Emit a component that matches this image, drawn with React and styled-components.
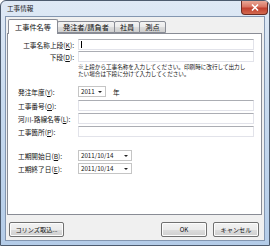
import React from "react";
import styled, { createGlobalStyle } from "styled-components";

const GlobalStyle = createGlobalStyle`
  html, body {
    margin: 0;
    padding: 0;
    background: #ffffff;
  }
  body {
    font-family: "Noto Sans CJK JP", "Noto Sans", sans-serif;
  }
  u {
    text-decoration-thickness: 0.5px;
    text-underline-offset: 1px;
  }
`;

const Window = styled.div`
  width: 270px;
  height: 246px;
  box-sizing: border-box;
  border: 1px solid #4d5b6e;
  border-radius: 6px 6px 0 0;
  background: linear-gradient(180deg, #dfe9f5 0%, #c9dbef 40%, #b4cce8 100%);
  display: flex;
  flex-direction: column;
  overflow: hidden;
`;

const TitleBar = styled.div`
  height: 15px;
  display: flex;
  align-items: flex-start;
  justify-content: space-between;
  padding-left: 6px;
`;

const Title = styled.span`
  font-size: 6.6px;
  line-height: 14px;
  color: #1a1a1a;
`;

const CloseButton = styled.div`
  width: 27px;
  height: 14px;
  margin-right: 1px;
  box-sizing: border-box;
  border: 1px solid #6b2b22;
  border-top: none;
  border-radius: 0 0 4px 4px;
  background: linear-gradient(180deg, #e9a897 0%, #d97462 45%, #c1402f 55%, #d2694f 100%);
  display: flex;
  align-items: center;
  justify-content: center;
`;

const Client = styled.div`
  flex: 1;
  margin: 0 4px 4px 4px;
  border: 1px solid #8396b0;
  background: #f0f0f0;
  display: flex;
  flex-direction: column;
  padding: 1px 1px 0 1px;
`;

const TabStrip = styled.div`
  display: flex;
  align-items: flex-end;
  height: 15px;
  padding-left: 1px;
  position: relative;
  z-index: 1;
`;

const Tab = styled.div`
  box-sizing: border-box;
  height: ${(p) => (p.$active ? "15px" : "12px")};
  padding: 0 ${(p) => (p.$active ? "6px" : "5px")};
  margin-left: ${(p) => (p.$first ? "0" : "-1px")};
  margin-bottom: ${(p) => (p.$active ? "-1px" : "0")};
  border: 1px solid #898c95;
  border-bottom: ${(p) => (p.$active ? "none" : "1px solid #898c95")};
  border-radius: 2px 2px 0 0;
  background: ${(p) =>
    p.$active ? "#ffffff" : "linear-gradient(180deg, #f3f3f3 0%, #ebebeb 50%, #dddddd 51%, #cfcfcf 100%)"};
  font-size: 7.2px;
  line-height: ${(p) => (p.$active ? "14px" : "11px")};
  color: #111;
  white-space: nowrap;
`;

const Panel = styled.div`
  height: 182px;
  box-sizing: border-box;
  margin-right: 1px;
  border: 1px solid #898c95;
  background: #ffffff;
  padding: 5px 7px 0 10px;
  display: flex;
  flex-direction: column;
`;

const Row = styled.div`
  display: flex;
  align-items: center;
  height: 11px;
  margin-top: ${(p) => p.$mt || 0}px;
`;

const Label = styled.div`
  width: 56px;
  flex: none;
  margin-right: 4px;
  text-align: ${(p) => (p.$right ? "right" : "left")};
  font-size: 6.7px;
  color: #111;
  white-space: nowrap;
`;

const TextBox = styled.div`
  flex: 1;
  height: 11px;
  box-sizing: border-box;
  border: 1px solid #e2e3ea;
  border-top-color: #abadb3;
  background: #ffffff;
  display: flex;
  align-items: center;
  padding-left: 2px;
`;

const Caret = styled.div`
  width: 1px;
  height: 7px;
  background: #000;
`;

const Note = styled.div`
  margin: 2px 0 0 60px;
  font-size: 5.6px;
  line-height: 7.2px;
  color: #111;
  white-space: nowrap;
`;

const Combo = styled.div`
  width: ${(p) => p.$w}px;
  height: 11px;
  box-sizing: border-box;
  border: 1px solid #c5c5c5;
  background: #ffffff;
  display: flex;
  align-items: center;
  justify-content: space-between;
  padding: 0 3px 0 2px;
  font-size: 6.2px;
  color: #111;
`;

const Arrow = styled.span`
  width: 0;
  height: 0;
  border-left: 2px solid transparent;
  border-right: 2px solid transparent;
  border-top: 2px solid #222;
`;

const Unit = styled.span`
  margin-left: 7px;
  font-size: 6.6px;
  color: #111;
`;

const ButtonRow = styled.div`
  flex: 1;
  display: flex;
  align-items: center;
  padding: 4px 4px 0 2px;
`;

const Spacer = styled.div`
  flex: 1;
`;

const Button = styled.div`
  width: ${(p) => p.$w}px;
  height: 15px;
  box-sizing: border-box;
  margin-left: ${(p) => p.$ml || 0}px;
  border: 1px solid #707070;
  border-radius: 2px;
  background: linear-gradient(180deg, #f2f2f2 0%, #ebebeb 50%, #dddddd 51%, #cfcfcf 100%);
  box-shadow: inset 0 0 0 1px #fcfcfc;
  display: flex;
  align-items: center;
  justify-content: center;
  font-size: 6.2px;
  color: #111;
  white-space: nowrap;
`;

export default function App() {
  return (
    <>
      <GlobalStyle />
      <Window>
        <TitleBar>
          <Title>工事情報</Title>
          <CloseButton>
            <svg width="8" height="7" viewBox="0 0 8 7">
              <path d="M1 0.5 L7 6.5 M7 0.5 L1 6.5" stroke="#ffffff" strokeWidth="1.6" />
            </svg>
          </CloseButton>
        </TitleBar>
        <Client>
          <TabStrip>
            <Tab $active $first>工事件名等</Tab>
            <Tab>発注者/請負者</Tab>
            <Tab>社員</Tab>
            <Tab>測点</Tab>
          </TabStrip>
          <Panel>
            <Row>
              <Label $right>
                工事名称上段(<u>K</u>):
              </Label>
              <TextBox>
                <Caret />
              </TextBox>
            </Row>
            <Row $mt={1}>
              <Label $right>
                下段(<u>D</u>):
              </Label>
              <TextBox />
            </Row>
            <Note>
              ※上段から工事名称を入力してください。印刷時に改行して出力し
              <br />
              たい場合は下段に分けて入力してください。
            </Note>
            <Row $mt={8}>
              <Label>
                発注年度(<u>Y</u>):
              </Label>
              <Combo $w={28}>
                2011
                <Arrow />
              </Combo>
              <Unit>年</Unit>
            </Row>
            <Row $mt={3}>
              <Label>
                工事番号(<u>O</u>):
              </Label>
              <TextBox />
            </Row>
            <Row $mt={2}>
              <Label>
                河川-路線名等(<u>L</u>):
              </Label>
              <TextBox />
            </Row>
            <Row $mt={2}>
              <Label>
                工事箇所(<u>P</u>):
              </Label>
              <TextBox />
            </Row>
            <Row $mt={13}>
              <Label>
                工期開始日(<u>B</u>):
              </Label>
              <Combo $w={54}>
                2011/10/14
                <Arrow />
              </Combo>
            </Row>
            <Row $mt={2}>
              <Label>
                工期終了日(<u>E</u>):
              </Label>
              <Combo $w={54}>
                2011/10/14
                <Arrow />
              </Combo>
            </Row>
          </Panel>
          <ButtonRow>
            <Button $w={55}>コリンズ取込...</Button>
            <Spacer />
            <Button $w={46}>OK</Button>
            <Button $w={46} $ml={6}>キャンセル</Button>
          </ButtonRow>
        </Client>
      </Window>
    </>
  );
}
